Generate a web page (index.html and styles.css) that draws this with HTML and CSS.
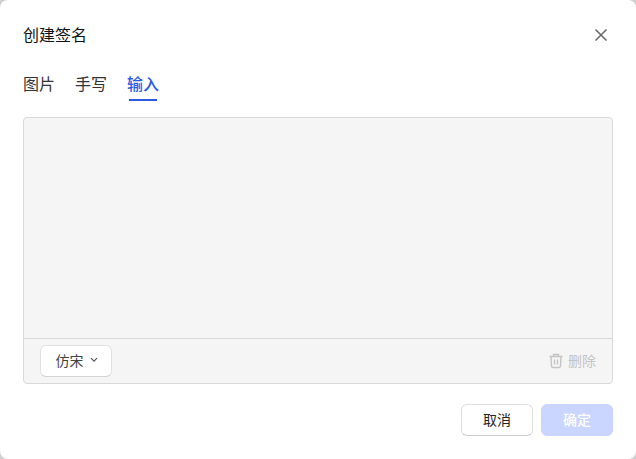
FILE: index.html
```html
<!DOCTYPE html>
<html lang="zh-CN">
<head>
	<meta charset="utf-8" />
	<title>创建签名</title>
	<link rel="stylesheet" href="styles.css">
</head>
<body>
	<div class="dialog">
		<div class="header">
			<h1>创建签名</h1>
			<svg class="close" width="14" height="14" viewBox="0 0 14 14"><path d="M1.5 1.5L12.5 12.5M12.5 1.5L1.5 12.5" /></svg>
		</div>
		<div class="tabs">
			<div class="tab">图片</div>
			<div class="tab">手写</div>
			<div class="tab active">输入</div>
		</div>
		<div class="panel">
			<div class="canvas"></div>
			<div class="toolbar">
				<button class="font-select">仿宋
					<svg width="8" height="6" viewBox="0 0 8 6"><path d="M1 1.2L4 4.2L7 1.2" /></svg>
				</button>
				<div class="delete">
					<svg width="16" height="16" viewBox="0 0 16 16"><path d="M1.5 3.5H14.5M5.5 3.5V1.5H10.5V3.5M3 3.5L3.5 13A1.5 1.5 0 0 0 5 14.5H11A1.5 1.5 0 0 0 12.5 13L13 3.5M6.5 6.5V11.5M9.5 6.5V11.5" /></svg>
					删除
				</div>
			</div>
		</div>
		<div class="footer">
			<button class="btn">取消</button>
			<button class="btn primary">确定</button>
		</div>
	</div>
</body>
</html>
```

FILE: styles.css
```css
html, body {
	height: 100%;
}
body {
	margin: 0;
	background-color: #d0d0d0;
	font-family: "Noto Sans CJK SC", "Liberation Sans", sans-serif;
}
.dialog {
	box-sizing: border-box;
	height: 459px;
	padding: 0 23px 0 23px;
	background-color: #fff;
	border-radius: 8px;
	display: flex;
	flex-direction: column;
}
.header {
	display: flex;
	justify-content: space-between;
	align-items: center;
	height: 69px;
}
.header h1 {
	margin: -2px 0 0;
	font-size: 16px;
	font-weight: 400;
	color: #111;
}
.close {
	margin-right: 5px;
}
.close path {
	stroke: #666;
	stroke-width: 1.5;
	fill: none;
}
.tabs {
	display: flex;
	gap: 20px;
	height: 32px;
}
.tab {
	position: relative;
	height: 30px;
	font-size: 16px;
	line-height: 28px;
	color: #333;
}
.tab.active {
	color: #2b5ae0;
	font-weight: 500;
}
.tab.active::after {
	content: "";
	position: absolute;
	left: 2px;
	right: 2px;
	bottom: -2px;
	height: 2px;
	background-color: #2b5ae0;
}
.panel {
	margin-top: 16px;
	height: 267px;
	box-sizing: border-box;
	border: 1px solid #d9d9d9;
	border-radius: 4px;
	background-color: #f5f5f5;
	display: flex;
	flex-direction: column;
}
.canvas {
	flex: 1;
	border-bottom: 1px solid #d9d9d9;
}
.toolbar {
	height: 44px;
	display: flex;
	justify-content: space-between;
	align-items: center;
	padding: 0 16px 0 16px;
}
button {
	font-family: inherit;
	cursor: pointer;
}
.font-select {
	box-sizing: border-box;
	width: 72px;
	height: 32px;
	padding: 0 0 2px 1px;
	border: 1px solid #e2e2e2;
	border-bottom-color: #d2d2d2;
	border-radius: 6px;
	background-color: #fff;
	font-size: 14px;
	color: #444;
	display: flex;
	align-items: center;
	justify-content: center;
	gap: 6px;
}
.font-select path {
	stroke: #555;
	stroke-width: 1.2;
	fill: none;
}
.delete {
	display: flex;
	align-items: center;
	gap: 4px;
	font-size: 14px;
	color: #c4c4c4;
	padding-bottom: 2px;
}
.delete svg {
	margin: 2px 0 0 -1px;
}
.delete path {
	stroke: #c4c4c4;
	stroke-width: 1.4;
	fill: none;
}
.footer {
	margin-top: 20px;
	display: flex;
	justify-content: flex-end;
	gap: 8px;
}
.btn {
	box-sizing: border-box;
	width: 72px;
	height: 32px;
	padding: 0 0 2px;
	border: 1px solid #dedede;
	border-bottom-color: #cdcdcd;
	border-radius: 6px;
	background-color: #fff;
	font-size: 14px;
	color: #222;
}
.btn.primary {
	border-color: #cad6ff;
	background-color: #cad6ff;
	color: #fff;
	font-weight: 500;
}
```
